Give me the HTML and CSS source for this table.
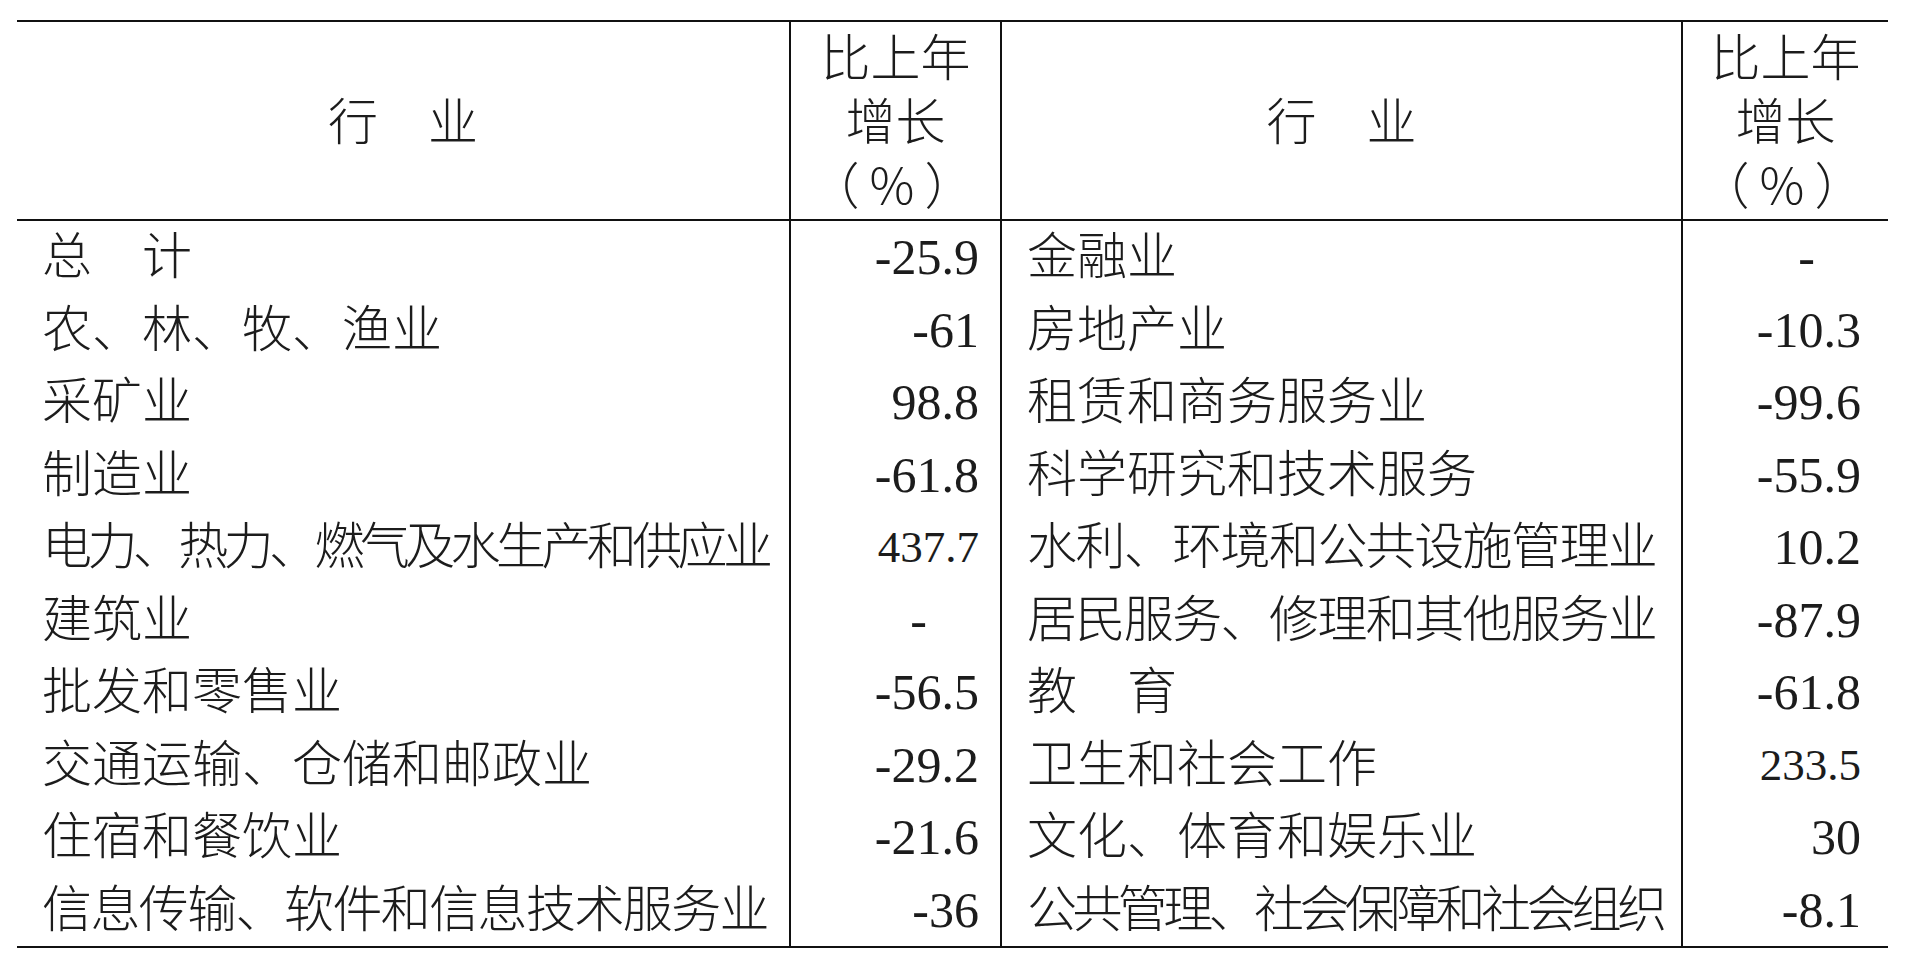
FILE: index.html
```html
<!DOCTYPE html>
<html lang="zh-CN">
<head>
<meta charset="utf-8">
<title>分行业固定资产投资增速</title>
<link rel="stylesheet" href="styles.css">
</head>
<body>
<table class="stats">
  <colgroup>
    <col class="w-name1">
    <col class="w-num1">
    <col class="w-name2">
    <col class="w-num2">
  </colgroup>
  <thead>
    <tr>
      <th class="h-name">行　业</th>
      <th class="h-num sep">比上年<br>增长<br><span class="paren">（%）</span></th>
      <th class="h-name sep">行　业</th>
      <th class="h-num sep">比上年<br>增长<br><span class="paren">（%）</span></th>
    </tr>
  </thead>
  <tbody>
    <tr>
      <td class="name">总　计</td>
      <td class="num n1 sep">-25.9</td>
      <td class="name sep">金融业</td>
      <td class="num n2 dash sep">-</td>
    </tr>
    <tr>
      <td class="name">农、林、牧、渔业</td>
      <td class="num n1 sep">-61</td>
      <td class="name sep">房地产业</td>
      <td class="num n2 sep">-10.3</td>
    </tr>
    <tr>
      <td class="name">采矿业</td>
      <td class="num n1 sep">98.8</td>
      <td class="name sep">租赁和商务服务业</td>
      <td class="num n2 sep">-99.6</td>
    </tr>
    <tr>
      <td class="name">制造业</td>
      <td class="num n1 sep">-61.8</td>
      <td class="name sep">科学研究和技术服务</td>
      <td class="num n2 sep">-55.9</td>
    </tr>
    <tr>
      <td class="name sq2">电力、热力、燃气及水生产和供应业</td>
      <td class="num n1 small sep">437.7</td>
      <td class="name sq1 sep">水利、环境和公共设施管理业</td>
      <td class="num n2 sep">10.2</td>
    </tr>
    <tr>
      <td class="name">建筑业</td>
      <td class="num n1 dash sep">-</td>
      <td class="name sq1 sep">居民服务、修理和其他服务业</td>
      <td class="num n2 sep">-87.9</td>
    </tr>
    <tr>
      <td class="name">批发和零售业</td>
      <td class="num n1 sep">-56.5</td>
      <td class="name sep">教　育</td>
      <td class="num n2 sep">-61.8</td>
    </tr>
    <tr>
      <td class="name">交通运输、仓储和邮政业</td>
      <td class="num n1 sep">-29.2</td>
      <td class="name sep">卫生和社会工作</td>
      <td class="num n2 small sep">233.5</td>
    </tr>
    <tr>
      <td class="name">住宿和餐饮业</td>
      <td class="num n1 sep">-21.6</td>
      <td class="name sep">文化、体育和娱乐业</td>
      <td class="num n2 sep">30</td>
    </tr>
    <tr>
      <td class="name sq1">信息传输、软件和信息技术服务业</td>
      <td class="num n1 sep">-36</td>
      <td class="name sq2 sep">公共管理、社会保障和社会组织</td>
      <td class="num n2 sep">-8.1</td>
    </tr>
  </tbody>
</table>
</body>
</html>
```

FILE: styles.css
```css
html, body {
  margin: 0;
  padding: 0;
  background: #ffffff;
}

body {
  font-family: "Liberation Serif", "Noto Sans CJK SC", serif;
  color: #1c1c1c;
}

.stats {
  border-collapse: collapse;
  table-layout: fixed;
  width: 1871px;
  margin: 20px 0 0 17px;
  font-size: 50px;
}

.w-name1 { width: 773px; }
.w-num1 { width: 211px; }
.w-name2 { width: 681px; }
.w-num2 { width: 206px; }

.stats th {
  font-family: "Noto Sans CJK SC", sans-serif;
  font-weight: 300;
  height: 192px;
  padding: 0 0 5px 0;
  line-height: 64px;
  text-align: center;
  vertical-align: middle;
  border-top: 2px solid #111;
  border-bottom: 2px solid #111;
}

.paren {
  letter-spacing: 10px;
  padding-left: 3px;
}

.stats td {
  height: 72.5px;
  padding: 0;
  line-height: 60px;
  vertical-align: middle;
  white-space: nowrap;
  overflow: hidden;
}

.stats tbody tr:last-child td {
  border-bottom: 2px solid #111;
}

.sep {
  border-left: 2px solid #111;
}

.name {
  text-align: left;
  padding-left: 25px !important;
  font-weight: 300;
}

.num {
  text-align: right;
}

.n1 { padding-right: 21px !important; }
.n2 { padding-right: 27px !important; }
.n1.dash, .n2.dash { padding-right: 73px !important; }

.small {
  font-size: 45px;
}

.sq1 { letter-spacing: -1.6px; }
.sq2 { letter-spacing: -4.6px; }
```
